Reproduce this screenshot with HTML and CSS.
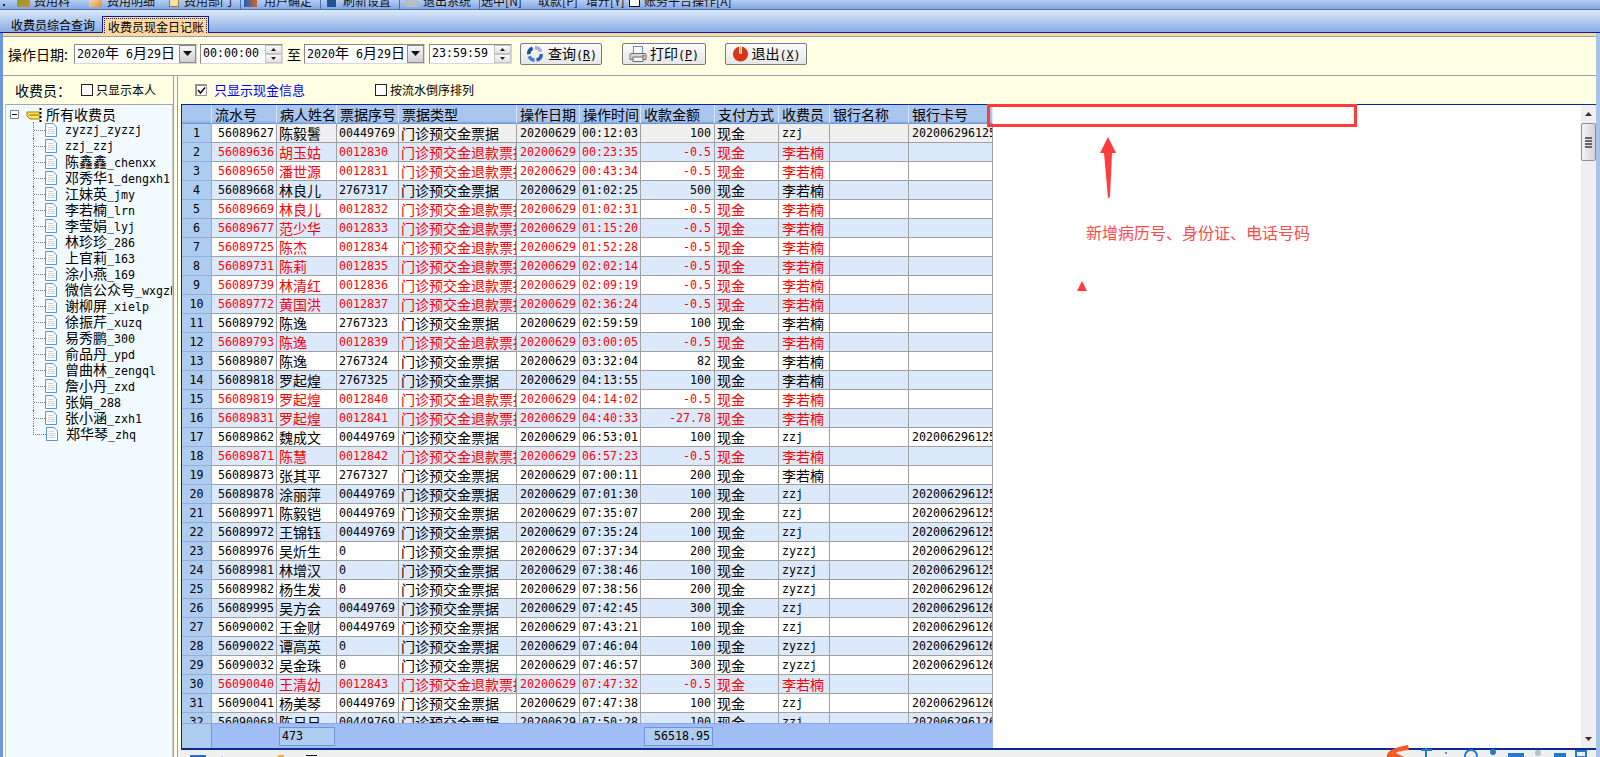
FILE: index.html
```html
<!DOCTYPE html>
<html lang="zh-CN">
<head>
<meta charset="utf-8">
<title>收费员现金日记账</title>
<link rel="stylesheet" href="styles.css">
</head>
<body>
<div class="app">
  <div class="topbar">
    <span class="grip"></span>
    <span class="tool t1"><i class="ti green"></i>费用料</span>
    <span class="tool t2"><i class="ti orange"></i>费用明细</span>
    <span class="tool t3"><i class="ti tan"></i>费用部门</span>
    <span class="tsep"></span>
    <span class="tool t4"><i class="ti blue"></i>用户确定</span>
    <span class="tsep"></span>
    <span class="tool t5"><i class="ti navy"></i>刷新设置</span>
    <span class="tsep"></span>
    <span class="tool t6"><i class="ti grey"></i>退出系统</span>
    <span class="tsep"></span>
    <span class="tool t7">选中[N]</span>
    <span class="tool t8">取款[P]</span>
    <span class="tool t9">增开[Y]</span>
    <span class="tool t10"><i class="ti box"></i>账务平台操作[A]</span>
  </div>
  <div class="tabs">
    <span class="tab">收费员综合查询</span>
    <span class="tab active"><span class="focus">收费员现金日记账</span></span>
  </div>
  <div class="content">
    <div class="filter">
      <span class="lbl">操作日期:</span>
      <span class="input date"><span class="val"><span class="m">2020</span>年<span class="m">&nbsp;6</span>月<span class="m">29</span>日</span><span class="drop"><svg width="9" height="5" viewBox="0 0 9 5"><path d="M0 0h9L4.500 5z"/></svg></span></span>
      <span class="input time"><span class="val m">00:00:00</span><span class="spin"><b><svg width="5" height="3" viewBox="0 0 5 3"><path d="M2.500 0L5 3H0z"/></svg></b><b><svg width="5" height="3" viewBox="0 0 5 3"><path d="M0 0h5L2.500 3z"/></svg></b></span></span>
      <span class="to">至</span>
      <span class="input date d2"><span class="val"><span class="m">2020</span>年<span class="m">&nbsp;6</span>月<span class="m">29</span>日</span><span class="drop"><svg width="9" height="5" viewBox="0 0 9 5"><path d="M0 0h9L4.500 5z"/></svg></span></span>
      <span class="input time t2nd"><span class="val m">23:59:59</span><span class="spin"><b><svg width="5" height="3" viewBox="0 0 5 3"><path d="M2.500 0L5 3H0z"/></svg></b><b><svg width="5" height="3" viewBox="0 0 5 3"><path d="M0 0h5L2.500 3z"/></svg></b></span></span>
      <button class="btn b-query"><svg width="20" height="20" viewBox="0 0 20 20"><path d="M10 2a8 8 0 0 1 7.500 5.200l-3.400 1A4.600 4.600 0 0 0 10 5.400z" fill="#9fb4d0"/><path d="M18 10a8 8 0 0 1-6 7.700l-.9-3.300a4.600 4.600 0 0 0 3.500-4.400z" fill="#2f62b4"/><path d="M9.600 18a8 8 0 0 1-7-5l3.200-1.200a4.600 4.600 0 0 0 3.800 2.800z" fill="#3f7fd0"/><path d="M2 10.500A8 8 0 0 1 7 2.600l1.200 3.200A4.600 4.600 0 0 0 5.400 10z" fill="#1f4f9e"/></svg><span class="btxt">查询<span class="m">(<u>R</u>)</span></span></button>
      <button class="btn b-print"><svg width="18" height="18" viewBox="0 0 18 18"><rect x="4.500" y="1.500" width="9" height="7" fill="#fff" stroke="#6d8fc0"/><path d="M2 8.500h14a1 1 0 0 1 1 1v5H1v-5a1 1 0 0 1 1-1z" fill="#d8d8d8" stroke="#6e6e6e"/><rect x="4" y="12" width="10" height="4.500" fill="#f4f4f4" stroke="#6e6e6e"/><rect x="13.500" y="10" width="2" height="1.500" fill="#e33"/></svg><span class="btxt">打印<span class="m">(<u>P</u>)</span></span></button>
      <button class="btn b-exit"><svg width="17" height="17" viewBox="0 0 17 17"><circle cx="8.500" cy="9" r="7.600" fill="#d8361a"/><rect x="7" y="0.500" width="3" height="8" fill="#fff"/><rect x="7.800" y="1" width="1.400" height="6.600" fill="#f0a080"/></svg><span class="btxt">退出<span class="m">(<u>X</u>)</span></span></button>
    </div>
    <div class="main">
      <aside class="left">
        <div class="lhead">
          <span class="ltitle">收费员：</span>
          <span class="check"></span>
          <span class="small">只显示本人</span>
        </div>
        <div class="tree">
          <div class="root">
            <span class="exp"><svg width="9" height="9" viewBox="0 0 9 9"><path d="M.5.5h8v8h-8z" fill="#fff" stroke="#808080"/><path d="M2 4.500h5" stroke="#000"/></svg></span>
            <svg class="hand" width="16" height="15" viewBox="0 0 16 15"><path d="M1 5h13v7H4L1 9z" fill="#ffe45c" stroke="#a08000"/><path d="M3 8h10" stroke="#8a6a00"/><path d="M14.500 1v2M14.500 5v2M14.500 9v2M14.500 13v2" stroke="#000" stroke-width="2"/></svg>
            <span>所有收费员</span>
          </div>
          <ul class="leafs">
            <li><svg class="doc" viewBox="0 0 12 14"><use href="#doc"/></svg><span class="name m">zyzzj_zyzzj</span></li>
            <li><svg class="doc" viewBox="0 0 12 14"><use href="#doc"/></svg><span class="name m">zzj_zzj</span></li>
            <li><svg class="doc" viewBox="0 0 12 14"><use href="#doc"/></svg><span class="name">陈鑫鑫<span class="m">_chenxx</span></span></li>
            <li><svg class="doc" viewBox="0 0 12 14"><use href="#doc"/></svg><span class="name">邓秀华<span class="m">1_dengxh1</span></span></li>
            <li><svg class="doc" viewBox="0 0 12 14"><use href="#doc"/></svg><span class="name">江妹英<span class="m">_jmy</span></span></li>
            <li><svg class="doc" viewBox="0 0 12 14"><use href="#doc"/></svg><span class="name">李若楠<span class="m">_lrn</span></span></li>
            <li><svg class="doc" viewBox="0 0 12 14"><use href="#doc"/></svg><span class="name">李莹娟<span class="m">_lyj</span></span></li>
            <li><svg class="doc" viewBox="0 0 12 14"><use href="#doc"/></svg><span class="name">林珍珍<span class="m">_286</span></span></li>
            <li><svg class="doc" viewBox="0 0 12 14"><use href="#doc"/></svg><span class="name">上官莉<span class="m">_163</span></span></li>
            <li><svg class="doc" viewBox="0 0 12 14"><use href="#doc"/></svg><span class="name">涂小燕<span class="m">_169</span></span></li>
            <li><svg class="doc" viewBox="0 0 12 14"><use href="#doc"/></svg><span class="name">微信公众号<span class="m">_wxgzh</span></span></li>
            <li><svg class="doc" viewBox="0 0 12 14"><use href="#doc"/></svg><span class="name">谢柳屏<span class="m">_xielp</span></span></li>
            <li><svg class="doc" viewBox="0 0 12 14"><use href="#doc"/></svg><span class="name">徐振芹<span class="m">_xuzq</span></span></li>
            <li><svg class="doc" viewBox="0 0 12 14"><use href="#doc"/></svg><span class="name">易秀鹏<span class="m">_300</span></span></li>
            <li><svg class="doc" viewBox="0 0 12 14"><use href="#doc"/></svg><span class="name">俞品丹<span class="m">_ypd</span></span></li>
            <li><svg class="doc" viewBox="0 0 12 14"><use href="#doc"/></svg><span class="name">曾曲林<span class="m">_zengql</span></span></li>
            <li><svg class="doc" viewBox="0 0 12 14"><use href="#doc"/></svg><span class="name">詹小丹<span class="m">_zxd</span></span></li>
            <li><svg class="doc" viewBox="0 0 12 14"><use href="#doc"/></svg><span class="name">张娟<span class="m">_288</span></span></li>
            <li><svg class="doc" viewBox="0 0 12 14"><use href="#doc"/></svg><span class="name">张小涵<span class="m">_zxh1</span></span></li>
            <li><svg class="doc" viewBox="0 0 12 14"><use href="#doc"/></svg><span class="name">郑华琴<span class="m">_zhq</span></span></li>
          </ul>
        </div>
      </aside>
      <div class="split"></div>
      <section class="right">
        <div class="rhead">
          <span class="check on"><svg width="9" height="9" viewBox="0 0 9 9"><path d="M1 4l2.500 3L8 1.500" fill="none" stroke="#111" stroke-width="1.600"/></svg></span>
          <span class="cash">只显示现金信息</span>
          <span class="check c2"></span>
          <span class="small">按流水倒序排列</span>
        </div>
        <div class="pane">
          <div class="grid">
            <div class="scroll">
              <table class="data">
                <colgroup><col class="c0"><col class="c1"><col class="c2w"><col class="c3"><col class="c4"><col class="c5"><col class="c6"><col class="c7"><col class="c8"><col class="c9"><col class="c10"><col class="c11"></colgroup>
                <thead><tr><th></th><th>流水号</th><th>病人姓名</th><th>票据序号</th><th>票据类型</th><th>操作日期</th><th>操作时间</th><th>收款金额</th><th>支付方式</th><th>收费员</th><th>银行名称</th><th>银行卡号</th></tr></thead>
                <tbody>
                  <tr class="sel"><td>1</td><td class="cur">56089627</td><td>陈毅鬐</td><td>00449769</td><td>门诊预交金票据</td><td>20200629</td><td>00:12:03</td><td>100</td><td>现金</td><td class="m">zzj</td><td></td><td>202006296125</td></tr>
                  <tr class="red"><td>2</td><td>56089636</td><td>胡玉姑</td><td>0012830</td><td>门诊预交金退款票据</td><td>20200629</td><td>00:23:35</td><td>-0.5</td><td>现金</td><td>李若楠</td><td></td><td></td></tr>
                  <tr class="red"><td>3</td><td>56089650</td><td>潘世源</td><td>0012831</td><td>门诊预交金退款票据</td><td>20200629</td><td>00:43:34</td><td>-0.5</td><td>现金</td><td>李若楠</td><td></td><td></td></tr>
                  <tr><td>4</td><td>56089668</td><td>林良儿</td><td>2767317</td><td>门诊预交金票据</td><td>20200629</td><td>01:02:25</td><td>500</td><td>现金</td><td>李若楠</td><td></td><td></td></tr>
                  <tr class="red"><td>5</td><td>56089669</td><td>林良儿</td><td>0012832</td><td>门诊预交金退款票据</td><td>20200629</td><td>01:02:31</td><td>-0.5</td><td>现金</td><td>李若楠</td><td></td><td></td></tr>
                  <tr class="red"><td>6</td><td>56089677</td><td>范少华</td><td>0012833</td><td>门诊预交金退款票据</td><td>20200629</td><td>01:15:20</td><td>-0.5</td><td>现金</td><td>李若楠</td><td></td><td></td></tr>
                  <tr class="red"><td>7</td><td>56089725</td><td>陈杰</td><td>0012834</td><td>门诊预交金退款票据</td><td>20200629</td><td>01:52:28</td><td>-0.5</td><td>现金</td><td>李若楠</td><td></td><td></td></tr>
                  <tr class="red"><td>8</td><td>56089731</td><td>陈莉</td><td>0012835</td><td>门诊预交金退款票据</td><td>20200629</td><td>02:02:14</td><td>-0.5</td><td>现金</td><td>李若楠</td><td></td><td></td></tr>
                  <tr class="red"><td>9</td><td>56089739</td><td>林清红</td><td>0012836</td><td>门诊预交金退款票据</td><td>20200629</td><td>02:09:19</td><td>-0.5</td><td>现金</td><td>李若楠</td><td></td><td></td></tr>
                  <tr class="red"><td>10</td><td>56089772</td><td>黄国洪</td><td>0012837</td><td>门诊预交金退款票据</td><td>20200629</td><td>02:36:24</td><td>-0.5</td><td>现金</td><td>李若楠</td><td></td><td></td></tr>
                  <tr><td>11</td><td>56089792</td><td>陈逸</td><td>2767323</td><td>门诊预交金票据</td><td>20200629</td><td>02:59:59</td><td>100</td><td>现金</td><td>李若楠</td><td></td><td></td></tr>
                  <tr class="red"><td>12</td><td>56089793</td><td>陈逸</td><td>0012839</td><td>门诊预交金退款票据</td><td>20200629</td><td>03:00:05</td><td>-0.5</td><td>现金</td><td>李若楠</td><td></td><td></td></tr>
                  <tr><td>13</td><td>56089807</td><td>陈逸</td><td>2767324</td><td>门诊预交金票据</td><td>20200629</td><td>03:32:04</td><td>82</td><td>现金</td><td>李若楠</td><td></td><td></td></tr>
                  <tr><td>14</td><td>56089818</td><td>罗起煌</td><td>2767325</td><td>门诊预交金票据</td><td>20200629</td><td>04:13:55</td><td>100</td><td>现金</td><td>李若楠</td><td></td><td></td></tr>
                  <tr class="red"><td>15</td><td>56089819</td><td>罗起煌</td><td>0012840</td><td>门诊预交金退款票据</td><td>20200629</td><td>04:14:02</td><td>-0.5</td><td>现金</td><td>李若楠</td><td></td><td></td></tr>
                  <tr class="red"><td>16</td><td>56089831</td><td>罗起煌</td><td>0012841</td><td>门诊预交金退款票据</td><td>20200629</td><td>04:40:33</td><td>-27.78</td><td>现金</td><td>李若楠</td><td></td><td></td></tr>
                  <tr><td>17</td><td>56089862</td><td>魏成文</td><td>00449769</td><td>门诊预交金票据</td><td>20200629</td><td>06:53:01</td><td>100</td><td>现金</td><td class="m">zzj</td><td></td><td>202006296125</td></tr>
                  <tr class="red"><td>18</td><td>56089871</td><td>陈慧</td><td>0012842</td><td>门诊预交金退款票据</td><td>20200629</td><td>06:57:23</td><td>-0.5</td><td>现金</td><td>李若楠</td><td></td><td></td></tr>
                  <tr><td>19</td><td>56089873</td><td>张其平</td><td>2767327</td><td>门诊预交金票据</td><td>20200629</td><td>07:00:11</td><td>200</td><td>现金</td><td>李若楠</td><td></td><td></td></tr>
                  <tr><td>20</td><td>56089878</td><td>涂丽萍</td><td>00449769</td><td>门诊预交金票据</td><td>20200629</td><td>07:01:30</td><td>100</td><td>现金</td><td class="m">zzj</td><td></td><td>202006296125</td></tr>
                  <tr><td>21</td><td>56089971</td><td>陈毅铠</td><td>00449769</td><td>门诊预交金票据</td><td>20200629</td><td>07:35:07</td><td>200</td><td>现金</td><td class="m">zzj</td><td></td><td>202006296125</td></tr>
                  <tr><td>22</td><td>56089972</td><td>王锦钰</td><td>00449769</td><td>门诊预交金票据</td><td>20200629</td><td>07:35:24</td><td>100</td><td>现金</td><td class="m">zzj</td><td></td><td>202006296125</td></tr>
                  <tr><td>23</td><td>56089976</td><td>吴炘生</td><td>0</td><td>门诊预交金票据</td><td>20200629</td><td>07:37:34</td><td>200</td><td>现金</td><td class="m">zyzzj</td><td></td><td>202006296125</td></tr>
                  <tr><td>24</td><td>56089981</td><td>林增汉</td><td>0</td><td>门诊预交金票据</td><td>20200629</td><td>07:38:46</td><td>100</td><td>现金</td><td class="m">zyzzj</td><td></td><td>202006296125</td></tr>
                  <tr><td>25</td><td>56089982</td><td>杨生发</td><td>0</td><td>门诊预交金票据</td><td>20200629</td><td>07:38:56</td><td>200</td><td>现金</td><td class="m">zyzzj</td><td></td><td>202006296126</td></tr>
                  <tr><td>26</td><td>56089995</td><td>吴方会</td><td>00449769</td><td>门诊预交金票据</td><td>20200629</td><td>07:42:45</td><td>300</td><td>现金</td><td class="m">zzj</td><td></td><td>202006296126</td></tr>
                  <tr><td>27</td><td>56090002</td><td>王金财</td><td>00449769</td><td>门诊预交金票据</td><td>20200629</td><td>07:43:21</td><td>100</td><td>现金</td><td class="m">zzj</td><td></td><td>202006296126</td></tr>
                  <tr><td>28</td><td>56090022</td><td>谭高英</td><td>0</td><td>门诊预交金票据</td><td>20200629</td><td>07:46:04</td><td>100</td><td>现金</td><td class="m">zyzzj</td><td></td><td>202006296126</td></tr>
                  <tr><td>29</td><td>56090032</td><td>吴金珠</td><td>0</td><td>门诊预交金票据</td><td>20200629</td><td>07:46:57</td><td>300</td><td>现金</td><td class="m">zyzzj</td><td></td><td>202006296126</td></tr>
                  <tr class="red"><td>30</td><td>56090040</td><td>王清幼</td><td>0012843</td><td>门诊预交金退款票据</td><td>20200629</td><td>07:47:32</td><td>-0.5</td><td>现金</td><td>李若楠</td><td></td><td></td></tr>
                  <tr><td>31</td><td>56090041</td><td>杨美琴</td><td>00449769</td><td>门诊预交金票据</td><td>20200629</td><td>07:47:38</td><td>100</td><td>现金</td><td class="m">zzj</td><td></td><td>202006296126</td></tr>
                  <tr><td>32</td><td>56090068</td><td>陈日日</td><td>00449769</td><td>门诊预交金票据</td><td>20200629</td><td>07:50:28</td><td>100</td><td>现金</td><td class="m">zzj</td><td></td><td>202006296126</td></tr>
                </tbody>
              </table>
            </div>
            <div class="foot">
              <span class="fhead"></span>
              <span class="fcell count m">473</span>
              <span class="fcell sum m">56518.95</span>
            </div>
          </div>
          <div class="blank"></div>
          <div class="vbar">
            <span class="arr"><svg width="7" height="4" viewBox="0 0 7 4"><path d="M3.500 0L7 4H0z"/></svg></span>
            <span class="thumb"><i></i><i></i><i></i><i></i></span>
            <span class="track"></span>
            <span class="arr"><svg width="7" height="4" viewBox="0 0 7 4"><path d="M0 0h7L3.500 4z"/></svg></span>
          </div>
        </div>
        <div class="status">
          <i class="si blue"></i>
          <span class="stxt">记录</span>
          <i class="si orange"></i>
          <i class="si dark"></i>
        </div>
      </section>
    </div>
  </div>
  <div class="mark-box"></div>
  <svg class="mark-arrow" width="20" height="62" viewBox="0 0 20 62"><path d="M10 0l8 16h-4l-2 43-1 2h-1L6 16H2z" fill="#ff3b3b"/></svg>
  <div class="mark-text">新增病历号、身份证、电话号码</div>
  <svg class="mark-tri" width="10" height="10" viewBox="0 0 10 10"><path d="M5 0l5 10H0z" fill="#ff3b3b"/></svg>
  <svg class="tray" width="214" height="12" viewBox="0 0 214 12"><path d="M1 12C0 5 11 2 22 0l1 5C17 6 12 6 10 8l8 4z" fill="#f25a26"/><path d="M35 5h11M40 3v9" stroke="#2478d0" stroke-width="2"/><circle cx="60" cy="8" r="1" fill="#2478d0"/><circle cx="85" cy="11" r="6" fill="none" stroke="#2478d0" stroke-width="2"/><circle cx="107" cy="7" r="3" fill="#2478d0"/><rect x="122" y="8" width="16" height="4" fill="#2478d0"/><circle cx="152" cy="8" r="3" fill="#b0bed0"/><path d="M168 8h12v4h-12z" fill="#2478d0"/><path d="M190 6h10v6h-10z" fill="none" stroke="#2478d0" stroke-width="2"/></svg>
</div>
<svg class="defs" width="0" height="0"><symbol id="doc" viewBox="0 0 12 14"><path d="M.5.5h7.500l3.500 3.500v9.500h-11z" fill="#fff" stroke="#5f94cf"/><path d="M2.500 4.500h6M2.500 6.500h7M2.500 8.500h7M2.500 10.500h7" stroke="#c8d4e2"/></symbol></svg>
</body>
</html>
```

FILE: styles.css
```css
* { box-sizing: border-box; }
html, body { margin: 0; padding: 0; height: 100%; overflow: hidden; }
body { font-family: "Noto Sans CJK SC", "Liberation Sans", sans-serif; font-size: 14px; color: #000; background: #f0f0f0; }
.m { font-family: "DejaVu Sans Mono", "Noto Sans CJK SC", monospace; font-size: 11.63px; }
.app { position: relative; width: 1600px; height: 757px; display: flex; flex-direction: column; overflow: hidden; }

/* clipped toolbar */
.topbar { flex: 0 0 10px; display: flex; align-items: flex-end; overflow: hidden; background: linear-gradient(#b4cdf2, #84a8e2); border-bottom: 1px solid #4a70b4; font-size: 12px; line-height: 17px; color: #111; }
.grip { width: 2px; height: 2px; margin: 0 0 3px 3px; background: #222; }
.tool { display: flex; align-items: center; flex: none; white-space: nowrap; height: 18px; }
.ti { display: block; flex: none; width: 13px; height: 14px; margin-right: 5px; }
.ti.green { margin-right: 4px; background: linear-gradient(135deg, #55aa33, #e08a2a); }
.ti.orange { background: linear-gradient(135deg, #eef2fa, #e8901c); }
.ti.tan { background: #f4e0a8; border: 1px solid #a07a30; width: 10px; }
.ti.blue { margin-right: 7px; background: linear-gradient(90deg, #1f5fb4, #d8622a); }
.ti.navy { margin-right: 7px; background: #23548f; width: 9px; }
.ti.grey { background: #b8bcc4; }
.ti.box { width: 11px; margin-right: 4px; background: #fff; border: 1px solid #111; }
.t1 { margin-left: 12px; } .t2 { margin-left: 19px; } .t3 { margin-left: 14px; } .t4 { margin-left: 3px; }
.t5 { margin-left: 6px; } .t6 { margin-left: 5px; } .t7 { margin-left: 1px; width: 57px; } .t8 { width: 48px; } .t9 { width: 43px; }
.tsep { width: 1px; height: 10px; margin-left: 8px; background: #4a70b4; flex: none; }

/* tabs */
.tabs { flex: 0 0 23px; display: flex; align-items: flex-end; padding-left: 2px; background: linear-gradient(#dce9fb, #88ace5); border-bottom: 1px solid #0a1f9a; font-size: 12px; }
.tab { height: 15px; width: 100px; padding-left: 9px; line-height: 15px; white-space: nowrap; }
.tab.active { width: 107px; height: 17px; padding: 1px; margin-bottom: -1px; background: #fdd8a4; border: 1px solid #0a1f9a; border-bottom: 0; }
.focus { display: block; height: 15px; padding-left: 3px; line-height: 15px; border: 1px dotted #222; border-bottom: 0; }

.content { flex: 1; min-height: 0; display: flex; flex-direction: column; border-left: 3px solid #6c97dc; border-right: 4px solid #a9c4ec; background: #ffffe3; }
.filter { flex: 0 0 43px; display: flex; align-items: center; padding: 0 0 4px 5px; border-top: 3px solid #fdd8a4; border-bottom: 1px solid #a0a0a0; box-shadow: inset 0 1px 0 #a0a0a0; }
.lbl { width: 66px; white-space: nowrap; line-height: 18px; }
.input { display: flex; align-items: center; height: 20px; background: #fff; border: 1px solid #8a8a8a; border-right-color: #d8d8d8; border-bottom-color: #d8d8d8; white-space: nowrap; line-height: 17px; }
.val { flex: 1; padding-left: 2px; overflow: hidden; }
.date { width: 123px; }
.time { width: 83px; margin-left: 3px; }
.d2 { width: 121px; }
.t2nd { margin-left: 4px; }
.to { width: 21px; padding-left: 4px; line-height: 18px; }
.drop { width: 17px; height: 18px; flex: none; display: flex; align-items: center; justify-content: center; background: linear-gradient(#f6f6f6, #cfcfcf); border: 1px solid #8a8a8a; }
.spin { width: 17px; height: 18px; flex: none; display: flex; flex-direction: column; }
.spin b { flex: 1; display: flex; align-items: center; justify-content: center; background: linear-gradient(#fafafa, #e2e2e2); border: 1px solid #c4c4c4; }
.spin svg { fill: #222; }
.drop svg { fill: #111; }
.btn { display: flex; align-items: center; justify-content: center; gap: 3px; height: 22px; padding: 0; background: linear-gradient(#fbfbfb, #e6e6e6); border: 1px solid #7a7a7a; border-radius: 2px; font: inherit; font-size: 14px; color: #000; line-height: 18px; }
.btxt { white-space: nowrap; }
.b-query { width: 82px; margin-left: 8px; }
.b-print { width: 84px; margin-left: 20px; }
.b-exit { width: 82px; margin-left: 19px; }

.main { flex: 1; min-height: 0; display: flex; }
.left { width: 170px; padding-left: 2px; display: flex; flex-direction: column; }
.lhead { flex: 0 0 28px; display: flex; align-items: center; }
.ltitle { width: 76px; padding-left: 10px; line-height: 20px; white-space: nowrap; }
.check { display: inline-flex; align-items: center; justify-content: center; width: 12px; height: 12px; background: #fff; border: 1px solid #222; flex: none; }
.check.on { border-color: #999; box-shadow: inset 1px 1px 0 #888; }
.small { font-size: 12px; margin-left: 3px; line-height: 16px; white-space: nowrap; }
.tree { flex: 1; background: #f0faff; border-top: 1px solid #a8a8a8; border-right: 1px solid #c8c8c8; border-left: 1px solid #c8c8c8; overflow: hidden; }
.root { display: flex; align-items: center; height: 18px; padding-left: 4px; line-height: 18px; }
.exp { display: flex; width: 9px; margin-right: 7px; }
.hand { margin-right: 4px; flex: none; }
.leafs { list-style: none; margin: -1px 0 0 27px; padding: 0; }
.leafs li { display: flex; align-items: center; height: 16px; line-height: 16px; white-space: nowrap; border-left: 1px dotted #777; overflow: hidden; }
.leafs li::before { content: ""; width: 11px; height: 8px; align-self: flex-start; border-bottom: 1px dotted #777; flex: none; }
.leafs li:last-child { border-left: 0; }
.leafs li:last-child::before { width: 12px; border-left: 1px dotted #777; }
.doc { width: 12px; height: 14px; margin-right: 8px; flex: none; }
.name { display: block; line-height: 16px; }

.split { width: 5px; border-left: 1px solid #a0a0a0; border-right: 1px solid #a0a0a0; background: #fbfbe8; }
.right { flex: 1; min-width: 0; display: flex; flex-direction: column; }
.rhead { flex: 0 0 28px; display: flex; align-items: center; padding-left: 17px; }
.cash { margin-left: 7px; width: 161px; font-size: 13px; color: #0000ff; line-height: 16px; white-space: nowrap; }
.pane { flex: 1; min-height: 0; display: flex; margin-left: 3px; border: 0 solid #0a2a90; border-width: 1px 0 2px 1px; background: #fff; }
.grid { width: 811px; flex: none; display: flex; flex-direction: column; }
.scroll { flex: 1; min-height: 0; overflow: hidden; }
.data { width: 811px; table-layout: fixed; border-collapse: separate; border-spacing: 0; }
.c0 { width: 30px; } .c1 { width: 65px; } .c2w { width: 60px; } .c3 { width: 62px; } .c4 { width: 118px; } .c5 { width: 63px; }
.c6 { width: 61px; } .c7 { width: 74px; } .c8 { width: 64px; } .c9 { width: 51px; } .c10 { width: 79px; } .c11 { width: 84px; }
.data th { height: 19px; padding: 0 0 0 3px; font-weight: normal; font-size: 14px; line-height: 17px; text-align: left; white-space: nowrap; overflow: hidden; background: linear-gradient(#a9c6ee 85%, #8bacdf); border-right: 1px solid #dbe7f8; border-bottom: 1px solid #6f95d6; }
.data td { height: 19px; padding: 0 3px 0 2px; font-size: 14px; line-height: 18px; white-space: nowrap; overflow: hidden; border-right: 1px solid #a0a0a0; border-bottom: 1px solid #a0a0a0; background: #fff; }
.data tbody tr:nth-child(even) td { background: #dce9fb; }
.data td:nth-child(1) { padding: 0; text-align: center; background: #aecbf0 !important; border-color: #8fb0e0; font-family: "DejaVu Sans Mono", monospace; font-size: 11.63px; }
.data td:nth-child(2) { padding-left: 6px; }
.data td:nth-child(2), .data td:nth-child(4), .data td:nth-child(6), .data td:nth-child(7), .data td:nth-child(8), .data td:nth-child(12), .data td.m { font-family: "DejaVu Sans Mono", monospace; font-size: 11.63px; }
.data td:nth-child(6), .data td:nth-child(12) { padding-left: 3px; }
.data td:nth-child(8) { text-align: right; }
.data td:nth-child(10) { padding-left: 3px; }
.data td:nth-child(12) { padding-right: 0; }
.data tr.red td { color: #ff0000; }
.data tr.red td:nth-child(1) { color: #000; }
.data tr.sel td { background: #f0f0f0; }
.data tr.sel td.cur { background: #fff; }
.foot { flex: 0 0 25px; display: flex; align-items: center; background: #a0bef5; border-top: 1px solid #8aa9e0; }
.fhead { width: 30px; align-self: stretch; background: #aecbf0; border-right: 1px solid #7096d8; }
.fcell { height: 19px; line-height: 17px; background: #aecbf0; border: 1px solid #7096d8; }
.count { width: 56px; margin-left: 67px; padding-left: 2px; }
.sum { width: 69px; margin-left: 309px; padding-right: 2px; text-align: right; }
.blank { flex: 1; background: #fff; border-left: 1px solid #fff; }
.vbar { width: 15px; flex: none; display: flex; flex-direction: column; background: #f0f0f0; }
.arr { height: 18px; display: flex; align-items: center; justify-content: center; }
.arr svg { fill: #333; }
.thumb { height: 38px; display: flex; flex-direction: column; align-items: center; justify-content: center; gap: 1px; background: linear-gradient(90deg, #f4f4f4, #d4d4d4); border: 1px solid #8f8f8f; border-radius: 2px; }
.thumb i { display: block; width: 7px; height: 2px; background: #666; }
.track { flex: 1; }
.status { flex: 0 0 7px; display: flex; align-items: flex-start; background: #f0f0f0; overflow: hidden; padding: 5px 0 0 12px; font-size: 12px; line-height: 14px; }
.si { display: block; height: 8px; flex: none; }
.si.blue { width: 16px; background: #2a6fd0; }
.si.orange { width: 6px; margin-left: 28px; background: #f0b040; }
.si.dark { width: 11px; margin-left: 22px; border-top: 1px solid #111; }
.stxt { margin-left: 14px; width: 30px; white-space: nowrap; }

/* annotations painted over the screenshot */
.mark-box { position: absolute; left: 987px; top: 104px; width: 370px; height: 23px; border: 3px solid #ff3b3b; }
.mark-arrow { position: absolute; left: 1098px; top: 137px; }
.mark-text { position: absolute; left: 1086px; top: 221px; font-size: 16px; line-height: 22px; color: #ff4a4a; white-space: nowrap; }
.mark-tri { position: absolute; left: 1077px; top: 281px; }
.tray { position: absolute; left: 1386px; top: 745px; }
.defs { position: absolute; }
```
